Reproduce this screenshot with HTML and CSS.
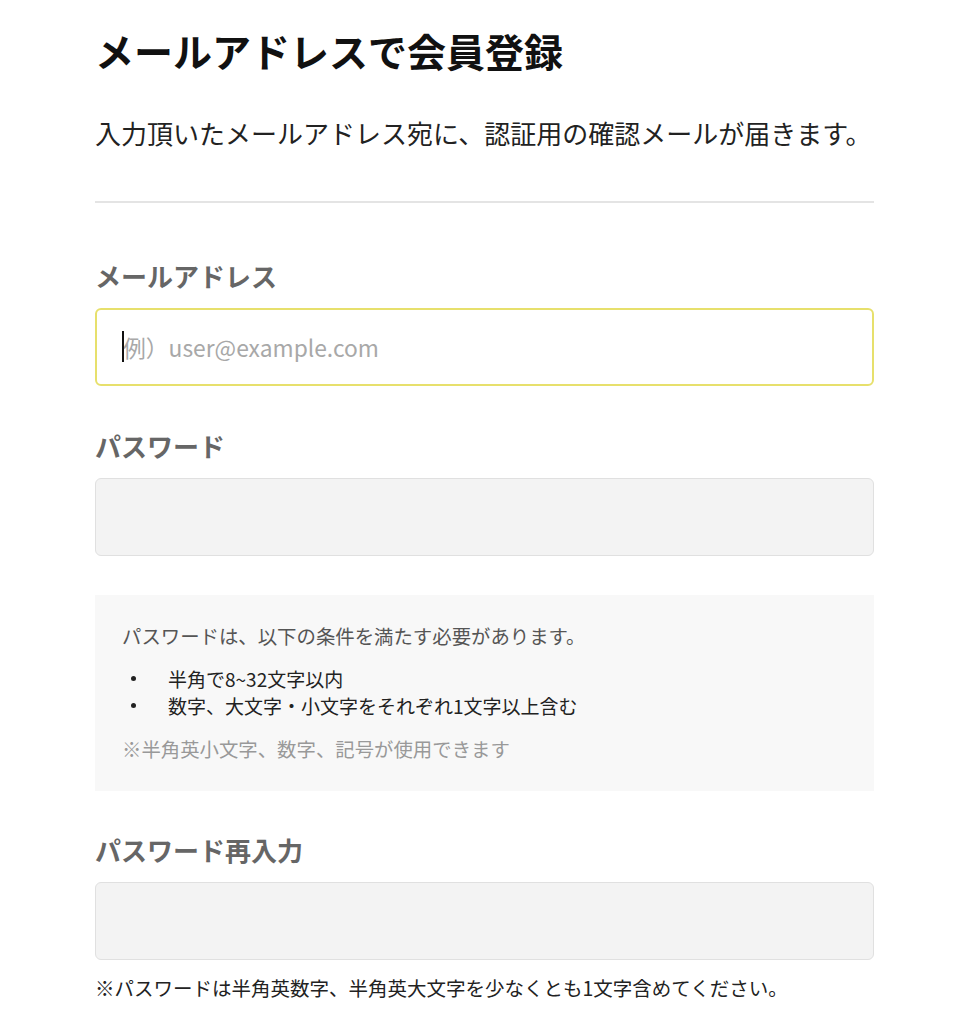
FILE: index.html
```html
<!DOCTYPE html>
<html lang="ja">
<head>
<meta charset="utf-8">
<title>メールアドレスで会員登録</title>
<link rel="stylesheet" href="styles.css">
</head>
<body>
<main class="page">
  <h1 class="title">メールアドレスで会員登録</h1>
  <p class="lead">入力頂いたメールアドレス宛に、認証用の確認メールが届きます。</p>
  <hr class="divider">
  <form class="form">
    <label class="label" for="email">メールアドレス</label>
    <div class="field-wrap">
      <input class="field field-focus" id="email" type="email" placeholder="例）user@example.com">
      <span class="caret" aria-hidden="true"></span>
    </div>

    <label class="label label-next" for="pw">パスワード</label>
    <input class="field" id="pw" type="password">

    <div class="rules">
      <p class="rules-intro">パスワードは、以下の条件を満たす必要があります。</p>
      <ul class="rules-list">
        <li>半角で8~32文字以内</li>
        <li>数字、大文字・小文字をそれぞれ1文字以上含む</li>
      </ul>
      <p class="rules-note">※半角英小文字、数字、記号が使用できます</p>
    </div>

    <label class="label label-after-box" for="pw2">パスワード再入力</label>
    <input class="field" id="pw2" type="password">

    <p class="note">※パスワードは半角英数字、半角英大文字を少なくとも1文字含めてください。</p>
  </form>
</main>
</body>
</html>
```

FILE: styles.css
```css
* { box-sizing: border-box; }

html, body {
  margin: 0;
  padding: 0;
  background: #ffffff;
}

body {
  font-family: "Noto Sans CJK JP", "Noto Sans", sans-serif;
  color: #222222;
}

.page {
  width: 779px;
  margin-left: 95px;
  padding-top: 22px;
}

.title {
  margin: 0;
  font-size: 39px;
  line-height: 56px;
  font-weight: 700;
  color: #111111;
}

.lead {
  margin: 35px 0 0;
  font-size: 26px;
  line-height: 40px;
  white-space: nowrap;
  color: #222222;
}

.divider {
  margin: 48px 0 0;
  border: 0;
  height: 2px;
  background: #e4e4e4;
}

.form {
  display: flex;
  flex-direction: column;
}

.label {
  display: block;
  margin-top: 55px;
  font-size: 26px;
  line-height: 36px;
  font-weight: 700;
  color: #666666;
}

.label-next { margin-top: 42px; }
.label-after-box { margin-top: 41px; }

.field-wrap {
  position: relative;
}

.field {
  display: block;
  width: 100%;
  height: 78px;
  margin-top: 14px;
  padding: 0 26px;
  border: 1.5px solid #e0e0e0;
  border-radius: 6px;
  background: #f3f3f3;
  font-family: "Noto Sans CJK JP", "Noto Sans", sans-serif;
  font-size: 22.8px;
  color: #222222;
  outline: none;
}

.field-focus {
  background: #ffffff;
  border: 2px solid #e7e06c;
}

.field::placeholder {
  color: #a8a8a8;
}

.caret {
  position: absolute;
  left: 27px;
  top: 37px;
  width: 2px;
  height: 31px;
  background: #111111;
}

.rules {
  margin-top: 39px;
  padding: 27px 27px 28px;
  background: #f8f8f8;
  font-size: 19.4px;
}

.rules-intro {
  margin: 0;
  line-height: 28px;
  color: #555555;
}

.rules-list {
  margin: 15px 0 0;
  padding-left: 0;
  list-style: none;
  font-size: 19px;
  line-height: 27px;
  color: #222222;
}

.rules-list li {
  display: flex;
  align-items: center;
}

.rules-list li::before {
  content: "";
  flex: none;
  width: 5px;
  height: 5px;
  margin: 0 32px 0 9px;
  border-radius: 50%;
  background: #222222;
}

.rules-note {
  margin: 16px 0 0;
  line-height: 28px;
  color: #999999;
}

.note {
  margin: 14px 0 0;
  font-size: 19.5px;
  line-height: 28px;
  color: #222222;
}
```
